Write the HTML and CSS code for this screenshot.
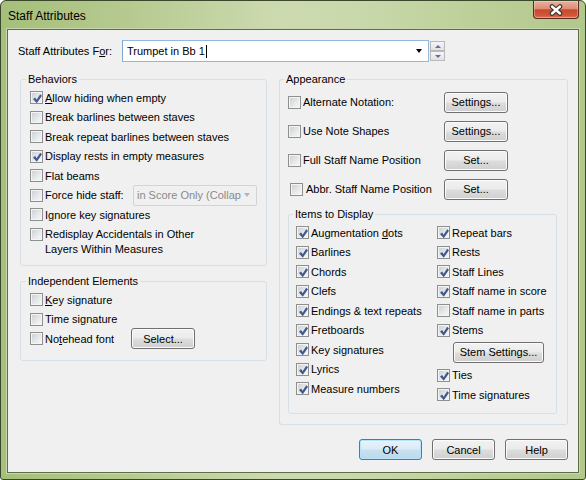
FILE: index.html
```html
<!DOCTYPE html>
<html lang="en">
<head>
  <meta charset="UTF-8">
  <meta name="viewport" content="width=device-width, initial-scale=1.0">
  <title>Staff Attributes</title>
  <link rel="stylesheet" href="styles.css">
</head>
<body>
  <div class="window">
    <div class="titlebar">
      <span class="title">Staff Attributes</span>
      <div class="close">
        <svg width="16" height="12" viewBox="0 0 16 12">
          <path d="M4 2.5 L12 9.5 M12 2.5 L4 9.5" stroke="#35312f" stroke-width="4.6" stroke-linecap="round"/>
          <path d="M4 2.5 L12 9.5 M12 2.5 L4 9.5" stroke="#ffffff" stroke-width="2.4" stroke-linecap="round"/>
        </svg>
      </div>
    </div>

    <div class="client">
      <!-- Staff selector -->
      <div class="for-row">
        <span class="for-label">Staff Attributes F<u>o</u>r:</span>
        <div class="combo">
          <span>Trumpet in Bb 1</span><span class="caret"></span>
          <span class="combo-arrow"></span>
        </div>
        <div class="spin">
          <span class="spin-btn up"></span>
          <span class="spin-btn down"></span>
        </div>
      </div>

      <div class="columns">
        <div class="col-left">
          <!-- Behaviors -->
          <fieldset class="group behaviors">
            <legend>Behaviors</legend>
            <div class="row"><span class="cb on"></span><span><u>A</u>llow hiding when empty</span></div>
            <div class="row"><span class="cb"></span><span>Break barlines between staves</span></div>
            <div class="row"><span class="cb"></span><span>Break repeat barlines between staves</span></div>
            <div class="row"><span class="cb on"></span><span>Display rests in empty measures</span></div>
            <div class="row"><span class="cb"></span><span>Flat beams</span></div>
            <div class="row">
              <span class="cb"></span><span class="force-label">Force hide staff:</span>
              <div class="dsel"><span>in Score Only (Collap</span><span class="dsel-arrow"></span></div>
            </div>
            <div class="row"><span class="cb"></span><span>Ignore key signatures</span></div>
            <div class="row multi"><span class="cb"></span><span>Redisplay Accidentals in Other<br>Layers Within Measures</span></div>
          </fieldset>

          <!-- Independent Elements -->
          <fieldset class="group independent">
            <legend>Independent Elements</legend>
            <div class="row"><span class="cb"></span><span><u>K</u>ey signature</span></div>
            <div class="row"><span class="cb"></span><span>Time si<u>g</u>nature</span></div>
            <div class="row">
              <span class="cb"></span><span class="note-label">No<u>t</u>ehead font</span>
              <button class="btn">Select...</button>
            </div>
          </fieldset>
        </div>

        <!-- Appearance -->
        <fieldset class="group appearance">
          <legend>Appearance</legend>
          <div class="arow">
            <div class="alabel"><span class="cb"></span><span>Alternate Notation:</span></div>
            <button class="btn">Settings...</button>
          </div>
          <div class="arow">
            <div class="alabel"><span class="cb"></span><span>Use Note Shapes</span></div>
            <button class="btn">Settings...</button>
          </div>
          <div class="arow">
            <div class="alabel"><span class="cb"></span><span>Full Staff Name Position</span></div>
            <button class="btn">Set...</button>
          </div>
          <div class="arow abbr">
            <div class="alabel"><span class="cb"></span><span>Abbr. Staff Name Position</span></div>
            <button class="btn">Set...</button>
          </div>

          <fieldset class="group items">
            <legend>Items to Display</legend>
            <div class="items-cols">
              <div class="items-col">
                <div class="row"><span class="cb on"></span><span>Augmentation <u>d</u>ots</span></div>
                <div class="row"><span class="cb on"></span><span>Barlines</span></div>
                <div class="row"><span class="cb on"></span><span>Chords</span></div>
                <div class="row"><span class="cb on"></span><span>Clefs</span></div>
                <div class="row"><span class="cb on"></span><span>Endings &amp; text repeats</span></div>
                <div class="row"><span class="cb on"></span><span>Fretboards</span></div>
                <div class="row"><span class="cb on"></span><span>Key signatures</span></div>
                <div class="row"><span class="cb on"></span><span>Lyrics</span></div>
                <div class="row"><span class="cb on"></span><span>Measure numbers</span></div>
              </div>
              <div class="items-col">
                <div class="row"><span class="cb on"></span><span>Repeat bars</span></div>
                <div class="row"><span class="cb on"></span><span>Rests</span></div>
                <div class="row"><span class="cb on"></span><span>Staff Lines</span></div>
                <div class="row"><span class="cb on"></span><span>Staff name in score</span></div>
                <div class="row"><span class="cb"></span><span>Staff name in parts</span></div>
                <div class="row"><span class="cb on"></span><span>Stems</span></div>
                <div class="stem-row"><button class="btn stem-btn">Stem Settings...</button></div>
                <div class="row"><span class="cb on"></span><span>Ties</span></div>
                <div class="row"><span class="cb on"></span><span>Time signatures</span></div>
              </div>
            </div>
          </fieldset>
        </fieldset>
      </div>

      <div class="footer">
        <button class="btn default">OK</button>
        <button class="btn">Cancel</button>
        <button class="btn">Help</button>
      </div>
    </div>
  </div>
</body>
</html>
```

FILE: styles.css
```css
body {
  margin: 0;
  font-family: "Liberation Sans", Arial, sans-serif;
  font-size: 11px;
  color: #000;
  background: #fff;
}
.window {
  box-sizing: border-box;
  width: 586px;
  height: 480px;
  border: 1px solid #3a482c;
  border-radius: 6px 6px 3px 3px;
  background: linear-gradient(to right, #a6bf7b 0%, #b6ca90 22%, #cddab0 48%, #c9d8ab 62%, #bccf98 82%, #b2c78c 100%);
  padding: 0 6px 6px;
  display: flex;
  flex-direction: column;
}
.titlebar {
  flex: none;
  height: 28px;
  display: flex;
  align-items: flex-start;
}
.title {
  font-size: 12px;
  line-height: 14px;
  margin: 8px 0 0 1px;
}
.close {
  margin-left: auto;
  width: 46px;
  height: 18px;
  box-sizing: border-box;
  border: 1px solid #5e2a1f;
  border-top: none;
  border-radius: 0 0 4px 4px;
  background: linear-gradient(#eab0a1 0%, #df8d76 45%, #c9472c 52%, #d0583a 85%, #dc7a5c 100%);
  box-shadow: inset 0 0 0 1px rgba(255, 255, 255, 0.3);
  display: flex;
  align-items: center;
  justify-content: center;
}
.client {
  flex: 1;
  box-sizing: border-box;
  border: 1px solid #5c6f44;
  box-shadow: 0 0 0 1px #c9d8ad;
  background: #f0f0f0;
  padding: 10px 10px 12px 10px;
}

/* top selector */
.for-row {
  display: flex;
  align-items: center;
  height: 22px;
}
.for-label {
  width: 104px;
}
.combo {
  box-sizing: border-box;
  width: 307px;
  height: 22px;
  border: 1px solid #93b8dc;
  border-left-color: #7fa8d2;
  background: #fff;
  display: flex;
  align-items: center;
  padding-left: 4px;
}
.caret {
  width: 1px;
  height: 13px;
  background: #000;
  margin-left: 1px;
}
.combo-arrow {
  margin-left: auto;
  margin-right: 6px;
  border-top: 4px solid #000;
  border-left: 3.5px solid transparent;
  border-right: 3.5px solid transparent;
}
.spin {
  width: 15px;
  height: 20px;
  margin-left: 1px;
  display: flex;
  flex-direction: column;
}
.spin-btn {
  flex: 1;
  box-sizing: border-box;
  border: 1px solid #b9b9b9;
  background: linear-gradient(#f6f6f6, #e2e2e2);
  display: flex;
  align-items: center;
  justify-content: center;
}
.spin-btn.up::after {
  content: "";
  border-bottom: 3px solid #5d70a2;
  border-left: 3px solid transparent;
  border-right: 3px solid transparent;
}
.spin-btn.down::after {
  content: "";
  border-top: 3px solid #5d70a2;
  border-left: 3px solid transparent;
  border-right: 3px solid transparent;
}

/* group boxes */
.columns {
  display: flex;
  align-items: flex-start;
  gap: 12px;
  margin-top: 10px;
  padding-left: 2px;
}
.col-left {
  width: 247px;
}
.group {
  box-sizing: border-box;
  margin: 0;
  min-width: 0;
  border: 1px solid #d5dfe5;
  border-radius: 3px;
  padding: 2px 8px 8px 9px;
}
.group legend {
  padding: 0 2px;
  margin-left: -4px;
  line-height: 14px;
}
.behaviors {
  height: 194px;
}
.independent {
  height: 87px;
  margin-top: 8px;
}
.appearance {
  width: 289px;
  height: 353px;
  padding: 1.5px 10px 10px 8px;
}
.items {
  height: 207px;
  margin-top: 3.5px;
  padding: 2px 7px 0 7px;
}
.items legend {
  margin-left: -3px;
}

/* rows and checkboxes */
.row {
  display: flex;
  align-items: center;
  height: 19.5px;
  white-space: nowrap;
}
.row.multi {
  align-items: flex-start;
  height: auto;
  padding-top: 2.5px;
  line-height: 15px;
}
.row.multi .cb {
  margin-top: 1px;
}
.cb {
  position: relative;
  flex: none;
  box-sizing: border-box;
  width: 13px;
  height: 13px;
  margin-right: 2px;
  border: 1px solid #8e8f8f;
  background: linear-gradient(135deg, #c9cdd2 0%, #e9eaeb 60%, #f8f8f8 100%);
  box-shadow: inset 0 0 0 1px #f4f4f4;
}
.cb.on::after {
  content: "";
  position: absolute;
  left: 2px;
  top: 2px;
  width: 9px;
  height: 9px;
  background: #41598f;
  clip-path: polygon(0% 52%, 24% 36%, 40% 60%, 80% 0%, 100% 16%, 42% 100%);
}
.force-label {
  width: 88px;
}
.note-label {
  width: 86px;
}
.dsel {
  box-sizing: border-box;
  width: 124px;
  height: 21px;
  border: 1px solid #d4d4d4;
  border-radius: 2px;
  color: #8a8a8a;
  padding-left: 3px;
  display: flex;
  align-items: center;
}
.dsel-arrow {
  margin-left: auto;
  margin-right: 6px;
  border-top: 4px solid #b4b4b4;
  border-left: 3.5px solid transparent;
  border-right: 3.5px solid transparent;
}

/* appearance rows */
.arow {
  display: grid;
  grid-template-columns: 156px 64px;
  align-items: center;
  height: 29px;
}
.alabel {
  display: flex;
  align-items: center;
  white-space: nowrap;
}
.abbr .cb {
  margin-left: 2px;
  margin-right: 3px;
}
.items-cols {
  display: flex;
}
.items-col {
  width: 141px;
}
.items-col + .items-col {
  flex: 1;
}
.stem-row {
  box-sizing: border-box;
  height: 25.5px;
  padding-top: 1.5px;
}

/* buttons */
.btn {
  box-sizing: border-box;
  height: 21px;
  width: 64px;
  padding: 0;
  font-family: inherit;
  font-size: 11px;
  color: #000;
  border: 1px solid #707070;
  border-radius: 3px;
  background: linear-gradient(#f2f2f2 0%, #ebebeb 48%, #dddddd 52%, #cfcfcf 100%);
  box-shadow: inset 0 0 0 1px #fbfbfb;
}
.stem-btn {
  width: 91px;
  margin-left: 16px;
}
.footer {
  display: flex;
  justify-content: flex-end;
  gap: 10px;
  margin-top: 14px;
}
.footer .btn {
  width: 63px;
}
.btn.default {
  border-color: #3c7fb1;
  background: linear-gradient(#e7f3fa 0%, #d9ecf7 48%, #c8e1ef 52%, #bcd8ea 100%);
  box-shadow: inset 0 0 0 1px #b7e4fa;
}
```
